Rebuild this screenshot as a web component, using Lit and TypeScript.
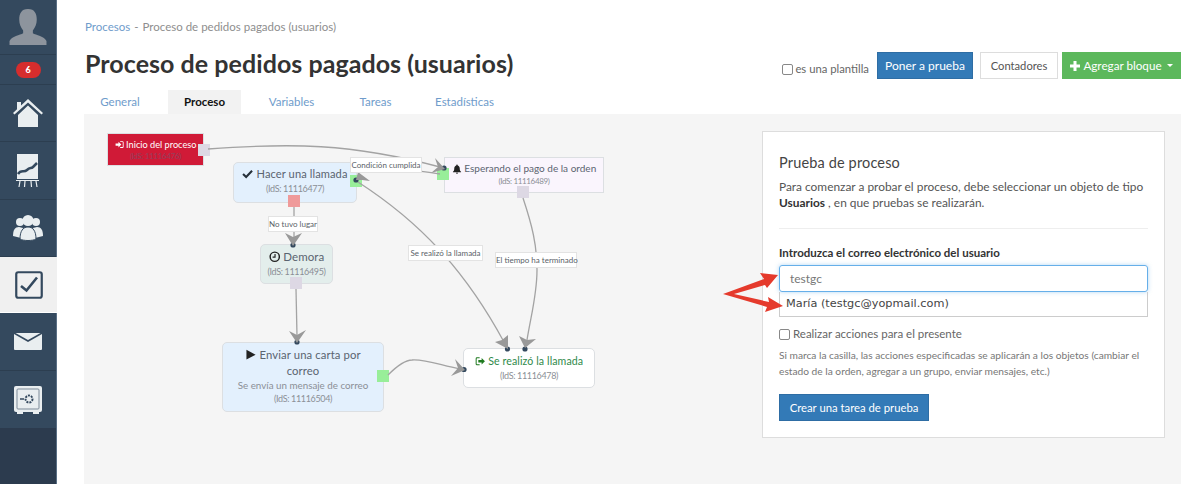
import { LitElement, html, css, svg } from "lit";
import { customElement } from "lit/decorators.js";

const arrow = (p: string, dot: [number, number]) => svg`
  <circle cx=${dot[0]} cy=${dot[1]} r="2.6" fill="#34495e"></circle>
  <polygon points=${p} fill="#999"></polygon>`;

const ic = {
  signin: html`<svg class="gi" viewBox="0 0 16 16"><path fill="currentColor" d="M1 6h5V3l5 5-5 5v-3H1zM9 2h4a2 2 0 0 1 2 2v8a2 2 0 0 1-2 2H9v-1.6h4a.5.5 0 0 0 .5-.5V4a.5.5 0 0 0-.5-.5H9z"/></svg>`,
  check: html`<svg class="gi" viewBox="0 0 16 16"><path fill="none" stroke="#26303a" stroke-width="3" d="M1.5 8.5 6 13l8.5-9"/></svg>`,
  clock: html`<svg class="gi" viewBox="0 0 16 16"><circle cx="8" cy="8" r="6.4" fill="none" stroke="#222" stroke-width="2"/><path fill="none" stroke="#222" stroke-width="1.6" d="M8.4 4v4.6H5"/></svg>`,
  bell: html`<svg class="gi" viewBox="0 0 16 16"><path fill="#222" d="M8 1a1.2 1.2 0 0 1 1.2 1.3C11.5 3 12.4 5 12.4 7c0 3 1 4.300 2.100 5.400v.8h-13v-.8C2.600 11.300 3.600 10 3.600 7c0-2 1-4 3.200-4.700A1.200 1.200 0 0 1 8 1zM6.300 14h3.400a1.700 1.700 0 0 1-3.400 0z"/></svg>`,
  play: html`<svg class="gi" viewBox="0 0 16 16"><path fill="#222" d="M2 1l13 7-13 7z"/></svg>`,
  signout: html`<svg class="gi" viewBox="0 0 16 16"><path fill="#1f7a1f" d="M7 2H3a2 2 0 0 0-2 2v8a2 2 0 0 0 2 2h4v-1.600H3a.5.5 0 0 1-.5-.5V4a.5.5 0 0 1 .5-.5h4z"/><path fill="#1f7a1f" d="M5 6h5V3l5 5-5 5v-3H5z"/></svg>`,
};

@customElement("flow-diagram")
class FlowDiagram extends LitElement {
  static styles = css`
    :host { display: block; position: relative; width: 678px; height: 370px; }
    svg.edges { position: absolute; inset: 0; width: 678px; height: 370px; z-index: 1; }
    .node { position: absolute; box-sizing: border-box; border: 1.5px solid #dcdfe2; border-radius: 5px; text-align: center; color: #5a6470; font-size: 11.500px; letter-spacing: .1px; line-height: 16px; padding-top: 4px; white-space: nowrap; }
    .ids { display: block; font-size: 9px; letter-spacing: -.35px; line-height: 13px; color: #8b8f96; }
    .sub { display: block; font-size: 9.800px; letter-spacing: 0; line-height: 13px; color: #8b8f96; }
    .gi { width: 1em; height: 1em; vertical-align: -1.5px; }
    .start { left: 23px; top: 19px; width: 97px; height: 33px; background: #d01a37; border-radius: 0; color: #fff; font-size: 9.200px; letter-spacing: 0; line-height: 13px; padding-top: 3.500px; }
    .start .ids { color: #94405c; font-size: 8px; line-height: 11px; }
    .call { left: 149px; top: 48px; width: 124px; height: 41px; background: #e3f0fd; padding-top: 3px; font-size: 11.100px; }
    .delay { left: 176px; top: 130px; width: 73px; height: 40px; background: #e3eeec; }
    .wait { left: 360px; top: 43px; width: 160px; height: 36px; background: #faf5fd; border-radius: 0; font-size: 10px; letter-spacing: 0; line-height: 16px; padding-top: 2px; }
    .wait .ids { font-size: 8px; line-height: 11px; }
    .send { left: 138px; top: 228px; width: 162px; height: 70px; background: #e3f0fd; white-space: normal; padding: 4px 8px 0; font-size: 11.300px; }
    .done { left: 379px; top: 234px; width: 132px; height: 40px; background: #fff; color: #2f8a4a; font-size: 10.600px; }
    .done .ids { color: #8b8f96; }
    .handle { position: absolute; width: 12px; height: 12px; z-index: 1; }
    .grey { background: #ddd8e4; }
    .green { background: #98ee99; }
    .red { background: #ef9a9a; }
    .tag { position: absolute; box-sizing: border-box; height: 16px; background: #fff; border: 1px solid #e3e3e3; color: #5a5f68; font-size: 8px; line-height: 14px; text-align: center; white-space: nowrap; z-index: 2; }
  `;
  render() {
    return html`
      <div class="node start">${ic.signin} Inicio del proceso<span class="ids">(IdS: 11116476)</span></div>
      <div class="node call">${ic.check} Hacer una llamada<span class="ids">(IdS: 11116477)</span></div>
      <div class="node delay">${ic.clock} Demora<span class="ids">(IdS: 11116495)</span></div>
      <div class="node wait">${ic.bell} Esperando el pago de la orden<span class="ids">(IdS: 11116489)</span></div>
      <div class="node send">${ic.play} Enviar una carta por correo<span class="sub">Se envía un mensaje de correo</span><span class="ids">(IdS: 11116504)</span></div>
      <div class="node done">${ic.signout} Se realizó la llamada<span class="ids">(IdS: 11116478)</span></div>

      <div class="handle grey" style="left:114px;top:30px"></div>
      <div class="handle green" style="left:266px;top:61px"></div>
      <div class="handle red" style="left:204px;top:81px"></div>
      <div class="handle grey" style="left:206px;top:163px"></div>
      <div class="handle green" style="left:353px;top:54px"></div>
      <div class="handle grey" style="left:433px;top:72px"></div>
      <div class="handle green" style="left:293px;top:256px"></div>

      <svg class="edges" viewBox="84 114 678 370" fill="none">
        <g stroke="#a3a3a3" stroke-width="1.300">
          <path d="M208 149 C 290 143 350 143 440 167"></path>
          <path d="M362 164 C 390 167 410 170 440 174"></path>
          <path d="M294 207 V 238"></path>
          <path d="M296 289 L 297 336"></path>
          <path d="M358 182 C 420 222 465 270 504 342"></path>
          <path d="M523 198 C 532 225 537 245 537 270 C 537 295 531 315 527 340"></path>
          <path d="M388 375 C 398 365 405 360 412 360 C 425 359 440 365 460 369"></path>
        </g>
        ${arrow("445,169 435,158 438,167 431,173", [444, 168])}
        ${arrow("356,180 358,172 370,181 362,180", [356, 180])}
        ${arrow("293,246 285,233 293,237 302,233", [293, 245])}
        ${arrow("297,343 289,331 297,335 306,330", [297, 342])}
        ${arrow("508,349 495,342 502,340 508,335", [507.500, 349])}
        ${arrow("525,348 519,336 527,340 536,339", [525, 349])}
        ${arrow("465,370 455,359 458,368 451,376", [464, 369.500])}
      </svg>

      <div class="tag" style="left:266px;top:43px;width:72px">Condición cumplida</div>
      <div class="tag" style="left:184px;top:102px;width:50px">No tuvo lugar</div>
      <div class="tag" style="left:324px;top:131px;width:75px">Se realizó la llamada</div>
      <div class="tag" style="left:411px;top:138px;width:82px">El tiempo ha terminado</div>
    `;
  }
}

@customElement("app-root")
class AppRoot extends LitElement {
  static styles = css`
    :host { display: block; width: 1199px; height: 484px; overflow: hidden; position: relative; font-family: "Lato", "Liberation Sans", sans-serif; background: #fff; color: #555; }
    .page { display: flex; height: 484px; }
    .side { width: 57px; flex: none; background: #34495e; border-right: 1px solid #5a6f85; box-sizing: border-box; display: flex; flex-direction: column; }
    .row { display: flex; align-items: center; justify-content: center; border-bottom: 1px solid #2c3e50; box-sizing: border-box; flex: none; }
    .row svg { display: block; }
    .active { background: #f0f0f0; border-bottom: 1px solid #fff; width: 57px; }
    .badge { width: 25px; height: 16px; border-radius: 8px; background: #d62d2d; color: #fff; font-size: 9px; font-weight: 900; line-height: 16px; text-align: center; }
    .fill { flex: 1; background: #2c3b4e; }
    .main { flex: 1; min-width: 0; display: flex; flex-direction: column; }
    .crumb { margin: 20px 0 0 28px; font-size: 11.500px; line-height: 14px; color: #8e8e8e; display: flex; gap: 4px; }
    .link { color: #6f9ccb; }
    .head { display: flex; align-items: flex-start; margin: 0 18px 0 28px; height: 56px; }
    h1 { margin: 13px 0 0; font-size: 25px; line-height: 32px; font-weight: 700; color: #333; letter-spacing: .05px; white-space: nowrap; }
    .acts { margin-left: auto; display: flex; align-items: flex-start; padding-top: 18px; }
    .tpl { display: flex; align-items: center; gap: 2px; font-size: 11.300px; color: #666; margin: 10px 8px 0 0; line-height: 14px; }
    .box { width: 9px; height: 9px; border: 1px solid #888; border-radius: 2px; background: #fff; flex: none; }
    .btn { box-sizing: border-box; height: 27px; font-size: 12px; line-height: 25px; text-align: center; border: 1px solid transparent; white-space: nowrap; }
    .blue { background: #337ab7; color: #fff; border-color: #2e6da4; }
    .plain { background: #fff; color: #555; border-color: #ddd; width: 78px; margin: 0 4px 0 7px; font-size: 11.200px; }
    .ok { background: #5cb85c; color: #fff; width: 119px; display: flex; align-items: center; justify-content: center; gap: 3px; font-size: 11.700px; }
    .ok svg { width: 10px; height: 10px; display: block; }
    .caret { width: 0; height: 0; border: 3px solid transparent; border-top: 3.500px solid #fff; border-bottom: 0; margin-left: 2px; }
    .tabs { display: flex; margin-left: 27px; height: 24px; font-size: 11.500px; line-height: 24px; color: #6f9ccb; }
    .tab { text-align: center; }
    .tab.first { width: 72px; padding-right: 12px; }
    .tab.on { background: #f2f2f2; color: #111; font-weight: 700; }
    .canvas { margin-left: 27px; width: 1097px; flex: 1; background: #f5f5f5; display: flex; }
    .card { box-sizing: border-box; width: 403px; height: 307px; margin-top: 17px; background: #fff; border: 1px solid #ddd; padding: 22px 16px 0; }
    h2 { margin: 0; font-size: 14.500px; line-height: 18px; font-weight: 400; color: #444; letter-spacing: .15px; }
    .card p { margin: 7px 0 0; font-size: 11.900px; line-height: 16px; color: #555; }
    .card p b { color: #333; }
    hr { border: 0; border-top: 1px solid #eee; margin: 17px 0 16px; }
    .lab { font-size: 11.500px; font-weight: 700; color: #333; line-height: 16px; }
    .inp { box-sizing: border-box; height: 27px; margin-top: 4px; border: 1px solid #66afe9; border-radius: 3px; padding-left: 10px; font-size: 12px; line-height: 25px; color: #777; box-shadow: 0 0 4px rgba(102,175,233,.5); }
    .sug { box-sizing: border-box; height: 25px; border: 1px solid #ccc; border-top: 0; padding-left: 6px; font-family: "DejaVu Sans", sans-serif; font-size: 11.300px; line-height: 24px; color: #444; }
    .chk { display: flex; align-items: center; gap: 3px; margin-top: 10px; font-size: 11.500px; line-height: 14px; color: #666; }
    .note { margin-top: 6px; font-size: 10.200px; line-height: 16px; color: #777; }
    .go { display: block; width: 150px; margin-top: 15px; font-size: 11.300px; }
    .mark { position: absolute; left: 720px; top: 268px; width: 70px; height: 50px; z-index: 5; }
  `;
  render() {
    return html`
      <div class="page">
        <aside class="side">
          <div class="row" style="height:55px">
            <svg width="38" height="36" viewBox="0 0 38 37"><path fill="#8d949d" d="M19 0c7 0 9 5 9 11 0 4-1.500 8-4 11v3c3 2 12 3 14 8v4H0v-4c2-5 11-6 14-8v-3c-2.500-3-4-7-4-11 0-6 2-11 9-11z"/></svg>
          </div>
          <div class="row" style="height:30px"><div class="badge">6</div></div>
          <div class="row" style="height:57px">
            <svg width="30" height="28" viewBox="0 0 30 28"><path fill="#e9eef0" d="M15 0 30 14l-1.500 1.500L15 3.500 1.500 15.500 0 14l4-3.800V3h4v3.500zM5 16 15 6.500 25 16v12H5z"/></svg>
          </div>
          <div class="row" style="height:58px">
            <svg width="24" height="34" viewBox="0 0 24 34"><path fill="#e9eef0" d="M1 0h21v25H1z"/><path fill="none" stroke="#34495e" stroke-width="2.500" d="M2 20c3-5 6-1 9-4s4-1 6-3 3-3 4-4"/><path fill="none" stroke="#e9eef0" stroke-width="1.200" d="M0 26.500h23M4 27l-1 6M9 27l-.5 6M15 27l.5 6M20 27l1 6"/></svg>
          </div>
          <div class="row" style="height:57px">
            <svg width="30" height="26" viewBox="0 0 30 26"><g fill="#e9eef0"><circle cx="7" cy="7" r="4"/><circle cx="23" cy="7" r="4"/><path d="M0 21c0-6 2-9 6-9l4 1-2 10z"/><path d="M30 21c0-6-2-9-6-9l-4 1 2 10z"/></g><circle cx="15" cy="5.500" r="5.500" fill="#e9eef0"/><path fill="#e9eef0" stroke="#34495e" d="M7 24c0-8 3-12 8-12s8 4 8 12c-3 2-13 2-16 0z"/></svg>
          </div>
          <div class="row active" style="height:56px">
            <svg width="28" height="28" viewBox="0 0 28 28"><rect x="1.250" y="1.250" width="25.500" height="25.500" rx="2" fill="none" stroke="#34495e" stroke-width="2.200"/><path fill="none" stroke="#34495e" stroke-width="2.600" d="M6 15l5.500 4.500L22 6.500"/></svg>
          </div>
          <div class="row" style="height:58px">
            <svg width="28" height="17" viewBox="0 0 28 17"><path fill="#e9eef0" d="M0 1 14 9 28 1v15a1 1 0 0 1-1 1H1a1 1 0 0 1-1-1z"/><path fill="#e9eef0" d="M1.500 0h25L14 7z"/></svg>
          </div>
          <div class="row" style="height:57px;border-bottom:0">
            <svg width="28" height="28" viewBox="0 0 28 28"><rect width="28" height="26" rx="2" fill="#e9eef0"/><path fill="#e9eef0" d="M3 25h6v3H3zM19 25h6v3h-6z"/><rect x="3" y="3" width="22" height="20" rx="1" fill="none" stroke="#7d8b99" stroke-width="1"/><circle cx="15" cy="13" r="3.500" fill="none" stroke="#34495e" stroke-width="2" stroke-dasharray="2 1"/><path stroke="#34495e" stroke-width="1.500" d="M6 13h4"/></svg>
          </div>
          <div class="fill"></div>
        </aside>
        <main class="main">
          <div class="crumb"><span class="link">Procesos</span><span>-</span><span>Proceso de pedidos pagados (usuarios)</span></div>
          <div class="head">
            <h1>Proceso de pedidos pagados (usuarios)</h1>
            <div class="acts">
              <label class="tpl"><span class="box"></span>es una plantilla</label>
              <div class="btn blue" style="width:96px">Poner a prueba</div>
              <div class="btn plain">Contadores</div>
              <div class="btn ok"><svg viewBox="0 0 10 10"><path fill="#fff" d="M3.500 0h3v3.500H10v3H6.500V10h-3V6.500H0v-3h3.500z"/></svg>Agregar bloque<span class="caret"></span></div>
            </div>
          </div>
          <nav class="tabs">
            <div class="tab first">General</div>
            <div class="tab on" style="width:73px">Proceso</div>
            <div class="tab" style="width:101px">Variables</div>
            <div class="tab" style="width:67px">Tareas</div>
            <div class="tab" style="width:111px">Estadísticas</div>
          </nav>
          <section class="canvas">
            <flow-diagram></flow-diagram>
            <div class="card">
              <h2>Prueba de proceso</h2>
              <p>Para comenzar a probar el proceso, debe seleccionar un objeto de tipo <b>Usuarios</b> , en que pruebas se realizarán.</p>
              <hr />
              <div class="lab">Introduzca el correo electrónico del usuario</div>
              <div class="inp">testgc</div>
              <div class="sug">María (testgc@yopmail.com)</div>
              <div class="chk"><span class="box"></span>Realizar acciones para el presente</div>
              <div class="note">Si marca la casilla, las acciones especificadas se aplicarán a los objetos (cambiar el estado de la orden, agregar a un grupo, enviar mensajes, etc.)</div>
              <div class="btn blue go">Crear una tarea de prueba</div>
            </div>
          </section>
        </main>
      </div>
      <svg class="mark" viewBox="720 268 70 50"><path fill="#e53a2c" d="M723 294 L764 279 L760 273 L778 275 L767 288 L765 285 L734 294 L769 302 L768 297 L783 306 L765 312 L767 307z"/></svg>
    `;
  }
}
